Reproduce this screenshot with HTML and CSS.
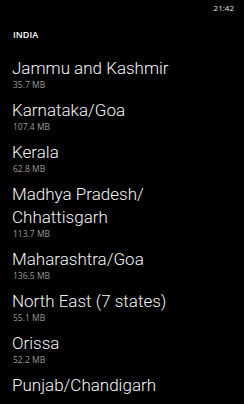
FILE: index.html
```html
<!DOCTYPE html>
<html>
<head>
<meta charset="utf-8">
<link rel="stylesheet" href="styles.css">
</head>
<body>
<div class="screen">
  <div class="status"><span class="time">21:42</span></div>
  <div class="header">INDIA</div>
  <ul class="list">
    <li class="item"><div class="title">Jammu and Kashmir</div><div class="size">35.7 MB</div></li>
    <li class="item"><div class="title">Karnataka/Goa</div><div class="size">107.4 MB</div></li>
    <li class="item"><div class="title">Kerala</div><div class="size">62.8 MB</div></li>
    <li class="item"><div class="title">Madhya Pradesh/<br>Chhattisgarh</div><div class="size">113.7 MB</div></li>
    <li class="item"><div class="title">Maharashtra/Goa</div><div class="size">136.5 MB</div></li>
    <li class="item"><div class="title">North East (7 states)</div><div class="size">55.1 MB</div></li>
    <li class="item"><div class="title">Orissa</div><div class="size">52.2 MB</div></li>
    <li class="item"><div class="title">Punjab/Chandigarh</div></li>
  </ul>
</div>
</body>
</html>
```
FILE: styles.css
```css
html, body {
  margin: 0;
  padding: 0;
  background: #000;
}
.screen {
  width: 244px;
  height: 404px;
  overflow: hidden;
  background: #000;
  color: #fff;
  font-family: "Open Sans", "Noto Sans", sans-serif;
}
.status {
  display: flex;
  justify-content: flex-end;
  height: 28px;
  padding-right: 10px;
}
.time {
  font-size: 8px;
  line-height: 16px;
  color: #e8e8e8;
}
.header {
  padding-left: 13px;
  font-size: 9px;
  font-weight: 600;
  line-height: 14px;
  color: #fff;
  height: 29px;
}
.list {
  list-style: none;
  margin: 0;
  padding: 0 0 0 12px;
}
.item {
  margin-bottom: 9px;
}
.title {
  font-family: Roboto, "Open Sans", sans-serif;
  font-size: 17px;
  font-weight: 300;
  line-height: 23px;
  color: #f6f6f6;
  white-space: nowrap;
}
.size {
  font-size: 8.5px;
  line-height: 10px;
  color: #9a9a9a;
  padding-left: 1px;
}
```
